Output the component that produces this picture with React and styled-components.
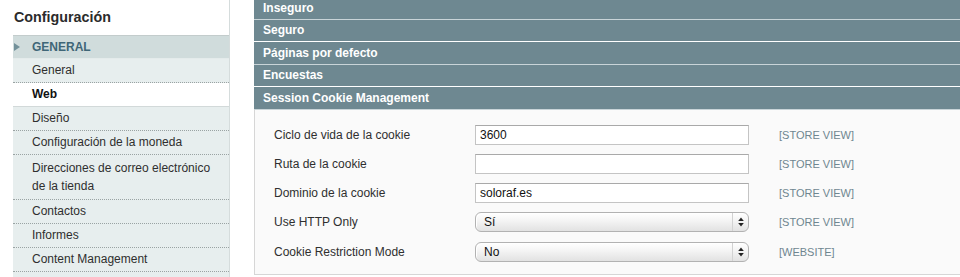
import React from 'react';
import styled, { createGlobalStyle } from 'styled-components';

const GlobalStyle = createGlobalStyle`
	html, body {
		margin: 0;
		padding: 0;
		background: #fff;
		overflow: hidden;
	}
	body {
		font-family: 'Liberation Sans', Arial, Helvetica, sans-serif;
		font-size: 12px;
		color: #2f2f2f;
	}
`;

const Page = styled('div')`
	display: flex;
	align-items: flex-start;
	gap: 24px;
	padding-left: 13px;
	height: 277px;
	overflow: hidden;
`;

const Sidebar = styled('aside')`
	width: 216px;
	flex: none;
	border-right: 1px solid #d5dcdc;
	min-height: 300px;
`;

const SideTitle = styled('h3')`
	margin: 0;
	height: 35px;
	padding-left: 1px;
	font-size: 14.3px;
	font-weight: bold;
	line-height: 35px;
	color: #2b2b2b;
`;

const SideList = styled('ul')`
	list-style: none;
	margin: 0;
	padding: 0;
	border-top: 1px solid #c3cccc;
`;

const GroupHead = styled('li')`
	display: flex;
	align-items: center;
	height: 22px;
	background: #d0dcdc;
	color: #3f6677;
	font-weight: bold;
	font-size: 12px;
	border-bottom: 1px solid #e4ebeb;
`;

const Arrow = styled('span')`
	width: 0;
	height: 0;
	margin: 0 12px 0 1px;
	border-top: 4px solid transparent;
	border-bottom: 4px solid transparent;
	border-left: 6px solid #73919a;
`;

const Item = styled('li')`
	padding: 4px 10px 4px 19px;
	min-height: 15px;
	line-height: ${p => (p.$tall ? '18px' : '15px')};
	background: ${p => (p.$active ? '#fff' : '#e7eeee')};
	font-weight: ${p => (p.$active ? 'bold' : 'normal')};
	color: ${p => (p.$active ? '#111' : '#2f2f2f')};
	border-bottom: 1px dotted #9aa3a3;
	${p => p.$active && 'border-bottom: 1px solid #d2d9d9;'}
`;

const Main = styled('main')`
	flex: 1;
	margin-top: -3px;
`;

const SectionHead = styled('div')`
	height: 21.5px;
	display: flex;
	align-items: center;
	padding-left: 9px;
	background: #6e8891;
	color: #fff;
	font-weight: bold;
	font-size: 12px;
	border-bottom: 1px solid ${p => (p.$light ? '#ffffff' : '#c9d4d8')};
`;

const FormPanel = styled('div')`
	background: #fafafa;
	border-left: 1px solid #d6d6d6;
	border-bottom: 1px solid #d6d6d6;
	padding: 15px 0 3px 19px;
`;

const Row = styled('div')`
	display: grid;
	grid-template-columns: 201px 274px auto;
	align-items: center;
	height: 29.25px;
	align-content: start;
`;

const Label = styled('label')`
	font-size: 12px;
	color: #2f2f2f;
	line-height: 20px;
`;

const TextInput = styled('div')`
	box-sizing: border-box;
	height: 20px;
	border: 1px solid #c4c4c4;
	border-top-color: #a9a9a9;
	background: #fff;
	padding-left: 4px;
	font-size: 12px;
	line-height: 18px;
	color: #111;
`;

const Select = styled('div')`
	box-sizing: border-box;
	height: 20px;
	display: flex;
	border: 1px solid #b2b2b2;
	border-radius: 6px;
	background: linear-gradient(#ffffff 0%, #f5f5f5 40%, #e2e2e2 100%);
	box-shadow: inset 1px 1px 0 #fff;
	font-size: 12px;
	line-height: 18px;
	color: #111;
`;

const SelectValue = styled('span')`
	flex: 1;
	padding-left: 8px;
`;

const SelectArrows = styled('span')`
	width: 15px;
	border-left: 1px solid #d2d2d2;
	display: flex;
	align-items: center;
	justify-content: center;
`;

const Scope = styled('span')`
	margin-left: 30px;
	font-size: 11px;
	color: #6f8690;
	line-height: 20px;
`;

const UpDown = () => (
	<svg width='6' height='10' viewBox='0 0 6 10'>
		<path d='M3 0.5 L5.8 4 L0.2 4 Z' fill='#222' />
		<path d='M3 9.5 L5.8 6 L0.2 6 Z' fill='#222' />
	</svg>
);

const menu = [
	{ label: 'General' },
	{ label: 'Web', active: true },
	{ label: 'Diseño' },
	{ label: 'Configuración de la moneda' },
	{ label: 'Direcciones de correo electrónico de la tienda', tall: true },
	{ label: 'Contactos' },
	{ label: 'Informes' },
	{ label: 'Content Management' },
	{ label: '' }
];

const sections = ['Inseguro', 'Seguro', 'Páginas por defecto', 'Encuestas', 'Session Cookie Management'];

const fields = [
	{ label: 'Ciclo de vida de la cookie', value: '3600', scope: '[STORE VIEW]' },
	{ label: 'Ruta de la cookie', value: '', scope: '[STORE VIEW]' },
	{ label: 'Dominio de la cookie', value: 'soloraf.es', scope: '[STORE VIEW]' },
	{ label: 'Use HTTP Only', value: 'Sí', scope: '[STORE VIEW]', select: true },
	{ label: 'Cookie Restriction Mode', value: 'No', scope: '[WEBSITE]', select: true }
];

export default function App() {
	return (
		<>
			<GlobalStyle />
			<Page>
				<Sidebar>
					<SideTitle>Configuración</SideTitle>
					<SideList>
						<GroupHead>
							<Arrow />
							GENERAL
						</GroupHead>
						{menu.map((m, i) => (
							<Item key={i} $active={m.active} $tall={m.tall}>
								{m.label}
							</Item>
						))}
					</SideList>
				</Sidebar>
				<Main>
					{sections.map((s, i) => (
						<SectionHead key={s} $light={i % 2 === 1}>
							{s}
						</SectionHead>
					))}
					<FormPanel>
						{fields.map(f => (
							<Row key={f.label}>
								<Label>{f.label}</Label>
								{f.select ? (
									<Select>
										<SelectValue>{f.value}</SelectValue>
										<SelectArrows>
											<UpDown />
										</SelectArrows>
									</Select>
								) : (
									<TextInput>{f.value}</TextInput>
								)}
								<Scope>{f.scope}</Scope>
							</Row>
						))}
					</FormPanel>
				</Main>
			</Page>
		</>
	);
}
